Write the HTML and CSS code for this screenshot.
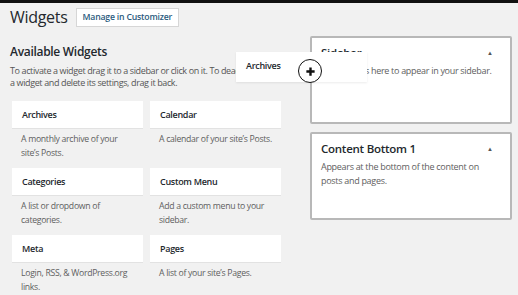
FILE: index.html
```html
<!DOCTYPE html>
<html>

<head>
    <title>Widgets</title>
    <link rel="stylesheet" href="styles.css">
</head>

<body>
    <div class="topbar"></div>
    <div class="wrap">
        <div class="page-head">
            <h1 class="page-title">Widgets</h1>
            <a class="page-button">Manage in Customizer</a>
        </div>
        <div class="columns">
            <div class="available">
                <h2 class="section-title">Available Widgets</h2>
                <p class="section-desc">To activate a widget drag it to a sidebar or click on it. To deactivate a widget and delete its settings, drag it back.</p>
                <div class="widget-list">
                    <div class="widget">
                        <div class="widget-top">Archives</div>
                        <p class="widget-desc">A monthly archive of your site’s Posts.</p>
                    </div>
                    <div class="widget">
                        <div class="widget-top">Calendar</div>
                        <p class="widget-desc">A calendar of your site’s Posts.</p>
                    </div>
                    <div class="widget">
                        <div class="widget-top">Categories</div>
                        <p class="widget-desc">A list or dropdown of categories.</p>
                    </div>
                    <div class="widget">
                        <div class="widget-top">Custom Menu</div>
                        <p class="widget-desc">Add a custom menu to your sidebar.</p>
                    </div>
                    <div class="widget">
                        <div class="widget-top">Meta</div>
                        <p class="widget-desc">Login, RSS, &amp; WordPress.org links.</p>
                    </div>
                    <div class="widget">
                        <div class="widget-top">Pages</div>
                        <p class="widget-desc">A list of your site’s Pages.</p>
                    </div>
                </div>
            </div>
            <div class="sidebars">
                <div class="sidebar-box">
                    <div class="sidebar-head">
                        <h3 class="sidebar-name">Sidebar</h3>
                        <span class="sidebar-arrow">▲</span>
                    </div>
                    <p class="sidebar-desc">Add widgets here to appear in your sidebar.</p>
                </div>
                <div class="sidebar-box">
                    <div class="sidebar-head">
                        <h3 class="sidebar-name">Content Bottom 1</h3>
                        <span class="sidebar-arrow">▲</span>
                    </div>
                    <p class="sidebar-desc">Appears at the bottom of the content on posts and pages.</p>
                </div>
            </div>
        </div>
    </div>

    <!-- widget being dragged -->
    <div class="dragging">Archives</div>
    <div class="drag-cursor">
        <svg width="11" height="11" viewBox="0 0 12 12">
            <path d="M6 1.5v9M1.5 6h9" stroke="#111" stroke-width="2.6"/>
        </svg>
    </div>
</body>

</html>
```

FILE: styles.css
```css
body {
    margin: 0;
    background-color: #f1f1f1;
    font-family: "Open Sans", Arial, sans-serif;
    color: #23282d;
    overflow: hidden;
}

.topbar {
    height: 3px;
    background-color: #111;
}

.wrap {
    padding: 0 6px 0 10px;
}

.page-head {
    display: flex;
    align-items: center;
    gap: 8px;
    margin-top: 4px;
}

.page-title {
    margin: 0;
    font-size: 16px;
    font-weight: 400;
    line-height: 20px;
    letter-spacing: -0.3px;
}

.page-button {
    font-size: 8.7px;
    font-weight: 600;
    color: #2b5b7e;
    background-color: #fff;
    border: 1px solid #d6d6d6;
    padding: 1px 6px 2px;
    line-height: 14px;
    letter-spacing: -0.2px;
}

.columns {
    display: flex;
    gap: 20px;
    margin-top: 9px;
}

.available {
    width: 280px;
    padding-top: 8px;
}

.section-title {
    margin: 0;
    font-size: 12px;
    font-weight: 600;
    line-height: 16px;
    letter-spacing: -0.3px;
}

.section-desc {
    margin: 5px 0 0;
    max-width: 256px;
    font-size: 9px;
    line-height: 12px;
    letter-spacing: -0.38px;
    color: #555;
}

.widget-list {
    display: grid;
    grid-template-columns: 131px 131px;
    column-gap: 7px;
    margin: 12px 0 0 2px;
}

.widget-top {
    background-color: #fff;
    border-bottom: 1px solid #e2e2e2;
    height: 27px;
    line-height: 27px;
    padding-left: 10px;
    font-size: 9px;
    font-weight: 600;
    letter-spacing: -0.3px;
}

.widget-desc {
    margin: 0;
    padding: 3px 8px 0 9px;
    height: 36px;
    font-size: 8.7px;
    line-height: 14px;
    letter-spacing: -0.3px;
    color: #5e5e5e;
}

.sidebars {
    display: flex;
    flex-direction: column;
    gap: 8px;
    width: 202px;
}

.sidebar-box {
    box-sizing: border-box;
    height: 88px;
    background-color: #fff;
    border: 2px solid #b8b8b8;
    border-radius: 2px;
    padding: 7px 17px 0 9px;
}

.sidebar-head {
    display: flex;
    justify-content: space-between;
    align-items: center;
}

.sidebar-name {
    margin: 0;
    font-size: 11.5px;
    font-weight: 600;
    line-height: 16px;
    letter-spacing: -0.25px;
}

.sidebar-arrow {
    font-size: 6px;
    color: #555;
}

.sidebar-desc {
    margin: 3px 0 0;
    font-size: 9px;
    line-height: 14px;
    letter-spacing: -0.3px;
    color: #5e5e5e;
}

.dragging {
    position: absolute;
    left: 236px;
    top: 52px;
    width: 121px;
    height: 30px;
    line-height: 28px;
    padding-left: 10px;
    background-color: #fff;
    font-size: 9px;
    font-weight: 600;
    letter-spacing: -0.3px;
    box-shadow: 0 1px 2px rgba(0, 0, 0, 0.08);
}

.drag-cursor {
    position: absolute;
    left: 298px;
    top: 59px;
    width: 22px;
    height: 22px;
    border: 1.5px solid #111;
    border-radius: 50%;
    background-color: #fff;
    display: flex;
    align-items: center;
    justify-content: center;
}
```
